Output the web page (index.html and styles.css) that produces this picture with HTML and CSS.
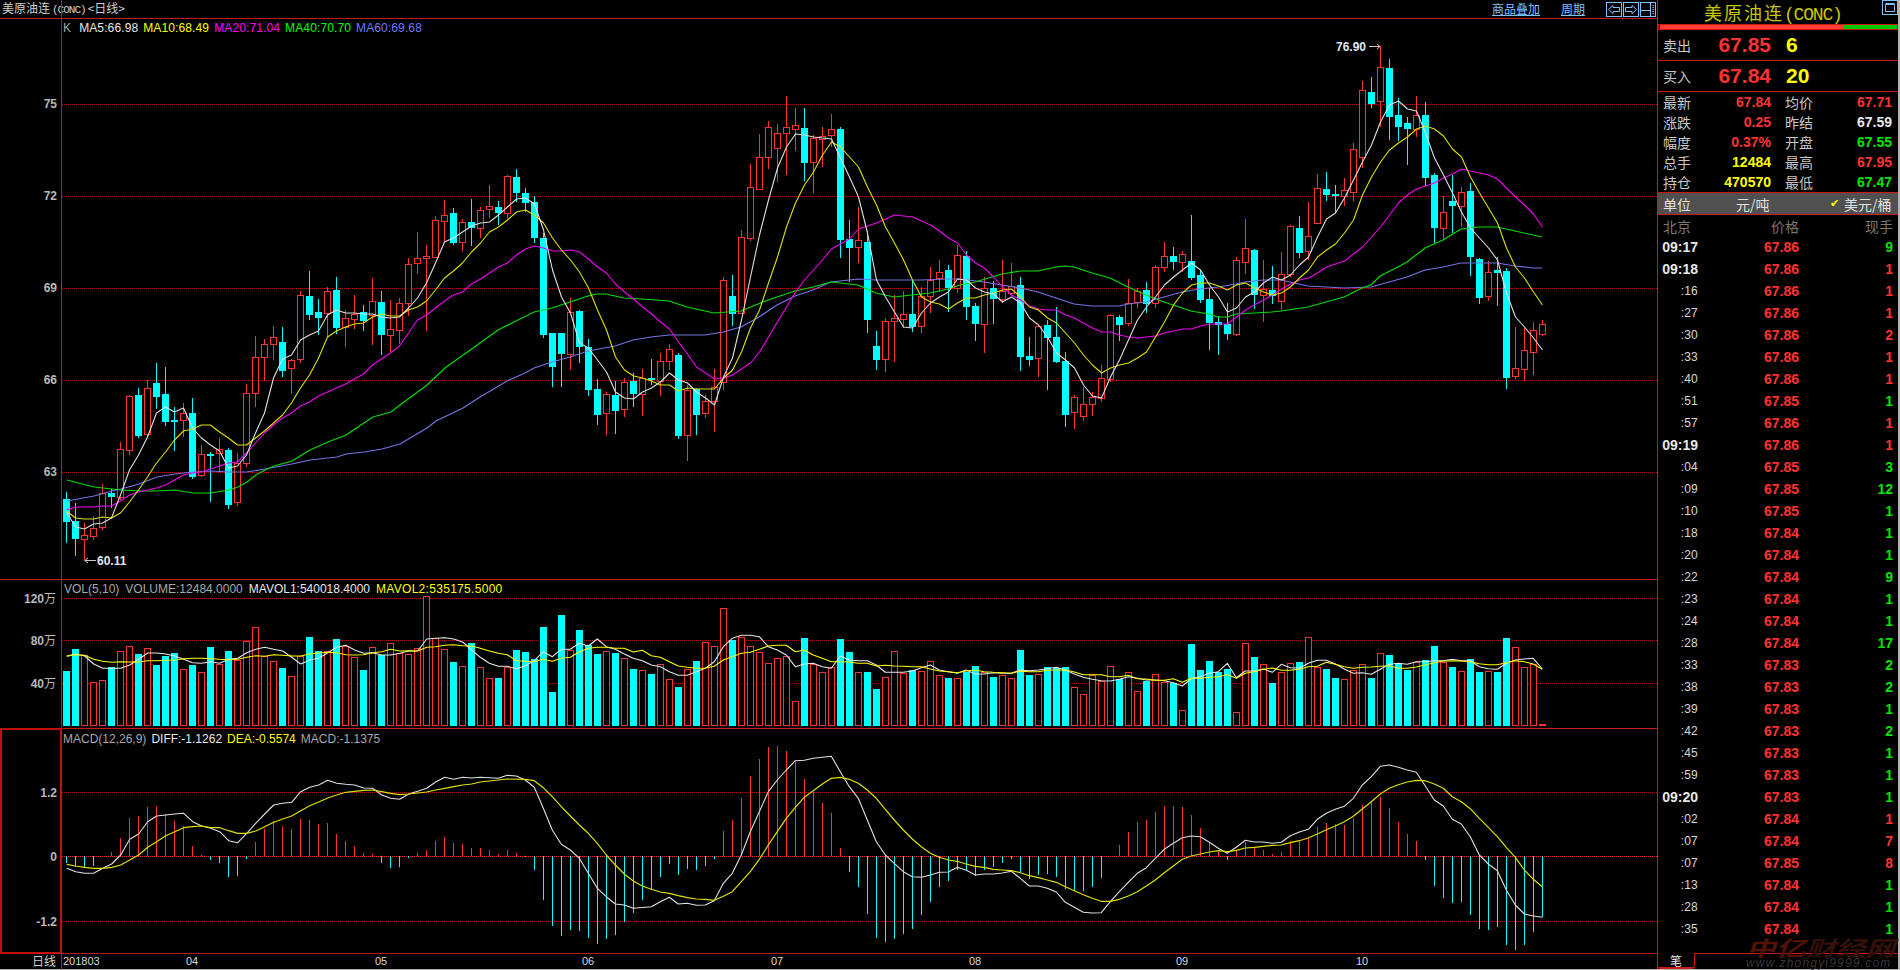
FILE: index.html
```html
<!DOCTYPE html>
<html lang="zh-CN">
<head>
<meta charset="utf-8">
<title>美原油连(CONC)</title>
<link rel="stylesheet" href="styles.css">
</head>
<body>
<div class="app">
  <main class="main">
    <header class="topbar">
      <div class="crumb">美原油连<span class="crumb-code">(CONC)</span>&lt;日线&gt;</div>
      <nav class="tools">
        <a class="tool-link">商品叠加</a>
        <a class="tool-link">周期</a>
        <div class="tool-btns">
          <svg class="btn" viewBox="0 0 16 15"><rect x=".5" y=".5" width="15" height="14"/><path d="M2.5 7.5 7 3.5V5.5H13.5V9.5H7V11.5Z"/></svg>
          <svg class="btn" viewBox="0 0 16 15"><rect x=".5" y=".5" width="15" height="14"/><path d="M13.5 7.5 9 3.5V5.5H2.5V9.5H9V11.5Z"/></svg>
          <svg class="btn" viewBox="0 0 16 15"><rect x=".5" y=".5" width="15" height="14"/><path d="M.5 8.5H10.5M10.5 .5V14.5M12.5 3.5H14M12.5 5.5H14M12.5 7.5H14M12.5 9.5H14M12.5 11.5H14"/></svg>
        </div>
      </nav>
    </header>

    <section class="pane pane-k">
      <svg id="chart-k" class="plot" width="1657" height="560" viewBox="0 19 1657 560"></svg>
      <div class="legend legend-k">
        <span class="c-grey lg-k">K</span>
        <span class="c-white">MA5:66.98</span>
        <span class="c-yellow">MA10:68.49</span>
        <span class="c-magenta">MA20:71.04</span>
        <span class="c-green">MA40:70.70</span>
        <span class="c-blue">MA60:69.68</span>
      </div>
    </section>

    <section class="pane pane-vol">
      <svg id="chart-vol" class="plot" width="1657" height="148" viewBox="0 580 1657 148"></svg>
      <div class="legend legend-vol">
        <span class="c-grey">VOL(5,10)</span>
        <span class="c-grey">VOLUME:12484.0000</span>
        <span class="c-white">MAVOL1:540018.4000</span>
        <span class="c-yellow lg-wide">MAVOL2:535175.5000</span>
      </div>
    </section>

    <section class="pane pane-macd">
      <svg id="chart-macd" class="plot" width="1657" height="224" viewBox="0 729 1657 224"></svg>
      <div class="legend legend-macd">
        <span class="c-grey">MACD(12,26,9)</span>
        <span class="c-white">DIFF:-1.1262</span>
        <span class="c-yellow">DEA:-0.5574</span>
        <span class="c-grey">MACD:-1.1375</span>
      </div>
    </section>

    <section class="pane-axis">
      <svg id="chart-axis" class="plot" width="1657" height="15" viewBox="0 954 1657 15"></svg>
    </section>
  </main>

  <aside class="side">
    <div class="side-title">
      <span>美原油连<span class="title-code">(CONC)</span></span>
      <svg class="btn btn-max" viewBox="0 0 16 15"><rect x=".5" y=".5" width="15" height="14"/><path d="M3.5 4.5H12.5V11.5H3.5ZM3.5 3.5H12.5"/></svg>
    </div>
    <div class="ratio"><div class="ratio-up"></div><div class="ratio-down"></div></div>

    <div class="quote">
      <span class="label">卖出</span><span class="quote-price up">67.85</span><span class="quote-vol">6</span>
    </div>
    <div class="quote">
      <span class="label">买入</span><span class="quote-price up">67.84</span><span class="quote-vol">20</span>
    </div>

    <div class="stats">
      <span class="label">最新</span><span class="num up">67.84</span><span class="label lab2">均价</span><span class="num up">67.71</span>
      <span class="label">涨跌</span><span class="num up">0.25</span><span class="label lab2">昨结</span><span class="num white">67.59</span>
      <span class="label">幅度</span><span class="num up">0.37%</span><span class="label lab2">开盘</span><span class="num down">67.55</span>
      <span class="label">总手</span><span class="num yellow">12484</span><span class="label lab2">最高</span><span class="num up">67.95</span>
      <span class="label">持仓</span><span class="num yellow">470570</span><span class="label lab2">最低</span><span class="num down">67.47</span>
    </div>

    <div class="unit">
      <span class="unit-label">单位</span>
      <span class="unit-a">元/吨</span>
      <span class="unit-check">✔</span>
      <span class="unit-b">美元/桶</span>
    </div>

    <div class="ticks-head">
      <span>北京</span><span>价格</span><span>现手</span>
    </div>

    <div class="ticks">
      <div class="row"><b class="t">09:17</b><b class="up">67.86</b><b class="down">9</b></div>
      <div class="row"><b class="t">09:18</b><b class="up">67.86</b><b class="up">1</b></div>
      <div class="row"><i>:16</i><b class="up">67.86</b><b class="up">1</b></div>
      <div class="row"><i>:27</i><b class="up">67.86</b><b class="up">1</b></div>
      <div class="row"><i>:30</i><b class="up">67.86</b><b class="up">2</b></div>
      <div class="row"><i>:33</i><b class="up">67.86</b><b class="up">1</b></div>
      <div class="row"><i>:40</i><b class="up">67.86</b><b class="up">1</b></div>
      <div class="row"><i>:51</i><b class="up">67.85</b><b class="down">1</b></div>
      <div class="row"><i>:57</i><b class="up">67.86</b><b class="up">1</b></div>
      <div class="row"><b class="t">09:19</b><b class="up">67.86</b><b class="up">1</b></div>
      <div class="row"><i>:04</i><b class="up">67.85</b><b class="down">3</b></div>
      <div class="row"><i>:09</i><b class="up">67.85</b><b class="down">12</b></div>
      <div class="row"><i>:10</i><b class="up">67.85</b><b class="down">1</b></div>
      <div class="row"><i>:18</i><b class="up">67.84</b><b class="down">1</b></div>
      <div class="row"><i>:20</i><b class="up">67.84</b><b class="down">1</b></div>
      <div class="row"><i>:22</i><b class="up">67.84</b><b class="down">9</b></div>
      <div class="row"><i>:23</i><b class="up">67.84</b><b class="down">1</b></div>
      <div class="row"><i>:24</i><b class="up">67.84</b><b class="down">1</b></div>
      <div class="row"><i>:28</i><b class="up">67.84</b><b class="down">17</b></div>
      <div class="row"><i>:33</i><b class="up">67.83</b><b class="down">2</b></div>
      <div class="row"><i>:38</i><b class="up">67.83</b><b class="down">2</b></div>
      <div class="row"><i>:39</i><b class="up">67.83</b><b class="down">1</b></div>
      <div class="row"><i>:42</i><b class="up">67.83</b><b class="down">2</b></div>
      <div class="row"><i>:45</i><b class="up">67.83</b><b class="down">1</b></div>
      <div class="row"><i>:59</i><b class="up">67.83</b><b class="down">1</b></div>
      <div class="row"><b class="t">09:20</b><b class="up">67.83</b><b class="down">1</b></div>
      <div class="row"><i>:02</i><b class="up">67.84</b><b class="up">1</b></div>
      <div class="row"><i>:07</i><b class="up">67.84</b><b class="up">7</b></div>
      <div class="row"><i>:07</i><b class="up">67.85</b><b class="up">8</b></div>
      <div class="row"><i>:13</i><b class="up">67.84</b><b class="down">1</b></div>
      <div class="row"><i>:28</i><b class="up">67.84</b><b class="down">1</b></div>
      <div class="row"><i>:35</i><b class="up">67.84</b><b class="down">1</b></div>
    </div>

    <div class="foot">
      <div class="foot-tab">笔</div>
      <div class="foot-rest"></div>
      <div class="watermark">
        <div class="wm-cn"><span class="wm-a">中亿</span><span class="wm-b">财经网</span></div>
        <div class="wm-en">www.zhongyi9999.com</div>
      </div>
    </div>
  </aside>
</div>
<script src="chart.js"></script>
</body>
</html>
```

FILE: styles.css
```css
* { box-sizing: border-box; }
html, body { margin: 0; padding: 0; background: #000; }
body {
  width: 1900px;
  height: 970px;
  overflow: hidden;
  font-family: "Liberation Sans", "Noto Sans CJK SC", sans-serif;
  color: #c8c8c8;
}
.app {
  display: flex;
  width: 1900px;
  height: 970px;
  border-bottom: 1px solid #b4b4b4;
}

/* left */
.main { width: 1657px; display: flex; flex-direction: column; flex: none; }
.topbar {
  height: 19px;
  border-bottom: 1px solid #c81818;
  display: flex;
  align-items: center;
  justify-content: space-between;
  padding-left: 2px;
  flex: none;
}
.crumb {
  font: 12px/18px "Noto Sans CJK SC", sans-serif;
  color: #d0d0d0;
  white-space: nowrap;
}
.crumb-code { font: 11px/18px "Liberation Mono", monospace; letter-spacing: -1px; margin: 0 2px 0 2px; }
.tools { display: flex; align-items: center; gap: 21px; }
.tool-link {
  font: 12px/13px "Noto Sans CJK SC", sans-serif;
  color: #80c0ff;
  border-bottom: 1px solid #80c0ff;
}
.tool-btns { display: flex; gap: 1px; padding-right: 1px; }
.btn { width: 16px; height: 15px; display: block; fill: none; stroke: #80c0ff; stroke-width: 1; }

.pane { position: relative; flex: none; border-bottom: 1px solid #c81818; }
.pane-k { height: 561px; }
.pane-vol { height: 149px; }
.pane-macd { height: 225px; border-bottom-color: #b81818; }
.pane-axis { height: 15px; flex: none; }
.plot { display: block; overflow: visible; }

.legend {
  position: absolute;
  left: 63px;
  display: flex;
  gap: 6px;
  font-size: 12px;
  line-height: 14px;
  white-space: nowrap;
}
.legend-k { top: 2px; gap: 5px; letter-spacing: .12px; }
.lg-k { margin-right: 3px; }
.legend-vol { top: 2px; left: 64px; }
.lg-wide { letter-spacing: .3px; }
.legend-macd { top: 3px; gap: 5px; }
.c-grey { color: #a8a8a8; }
.c-white { color: #e8e8e8; }
.c-yellow { color: #ffff00; }
.c-magenta { color: #ff00ff; }
.c-green { color: #00ff00; }
.c-blue { color: #6c78ff; }

/* svg text */
.tick { font: bold 12px "Liberation Sans", "Noto Sans CJK SC", sans-serif; fill: #b8b8b8; text-anchor: end; }
.tick-cn { font: 12px "Noto Sans CJK SC", sans-serif; }
.date { font: 11px "Liberation Sans", sans-serif; fill: #d8d8d8; }
.mark { font: bold 12px "Liberation Sans", sans-serif; fill: #dfe8f0; }
.axis-cn { font: 12px "Noto Sans CJK SC", sans-serif; fill: #d0d0d0; text-anchor: end; }

/* right */
.side {
  width: 243px;
  flex: none;
  display: flex;
  flex-direction: column;
  border-left: 1px solid #c81818;
  border-right: 2px solid #b4b4b4;
  position: relative;
}
.side-title {
  height: 24px;
  flex: none;
  display: flex;
  align-items: center;
  padding-left: 46px;
  padding-top: 2px;
  font: 18px/24px "Noto Sans CJK SC", sans-serif;
  letter-spacing: 2px;
  color: #c8c800;
  position: relative;
  white-space: nowrap;
}
.title-code { font: 18px/24px "Liberation Mono", monospace; letter-spacing: -1.2px; }
.btn-max { position: absolute; right: 0; top: 0; }
.ratio {
  height: 6px;
  flex: none;
  display: flex;
  border: 1px solid #c81818;
  padding-left: 1px;
}
.ratio-up { width: 183px; background: #ff3c32; }
.ratio-down { flex: 1; background: #00c800; }
.label { font: 14px/20px "Noto Sans CJK SC", sans-serif; color: #c8c8c8; }
.quote {
  height: 31px;
  flex: none;
  display: flex;
  align-items: center;
  padding-left: 5px;
  border-bottom: 1px solid #c81818;
}
.quote-price {
  width: 80px;
  text-align: right;
  font: bold 21px/30px "Liberation Sans", sans-serif;
}
.quote .label { width: 28px; }
.quote-vol { font: bold 21px/30px "Liberation Sans", sans-serif; color: #ffff00; margin-left: 15px; }
.up { color: #ff3232; }
.down { color: #00e600; }
.white { color: #e8e8e8; }
.yellow { color: #ffff00; }
.stats {
  height: 100px;
  flex: none;
  display: grid;
  grid-template-columns: 28px 80px 42px 79px;
  grid-auto-rows: 20px;
  padding-left: 5px;
}
.lab2 { padding-left: 14px; }
.num { font: bold 14px/20px "Liberation Sans", sans-serif; text-align: right; }
.unit {
  height: 23px;
  flex: none;
  background: #505050;
  border-top: 1px solid #c81818;
  border-bottom: 1px solid #c81818;
  display: grid;
  grid-template-columns: 73px 94px 14px 1fr;
  align-items: center;
  padding-left: 5px;
  font: 14px/20px "Noto Sans CJK SC", sans-serif;
  color: #e0e0e0;
  white-space: nowrap;
}
.unit-check { color: #ffff00; font: 11px/20px "DejaVu Sans", sans-serif; }
.ticks-head {
  height: 21px;
  flex: none;
  display: grid;
  grid-template-columns: 1fr auto auto;
  padding-left: 5px;
  font: 14px/22px "Noto Sans CJK SC", sans-serif;
  color: #787878;
}
.ticks-head span:nth-child(2) { margin-right: 66px; }
.ticks-head span:nth-child(3) { margin-right: 5px; }
.ticks { flex: none; }
.row {
  height: 22px;
  display: grid;
  grid-template-columns: 40px 101px 94px;
  align-items: center;
  text-align: right;
  font: bold 14px/14px "Liberation Sans", sans-serif;
}
.row i { font: normal 12px/14px "Liberation Sans", sans-serif; color: #d8d8d8; letter-spacing: .2px; }
.row .t { color: #e8e8e8; }
.foot {
  position: absolute;
  left: 0; right: 0; top: 953px;
  height: 16px;
  display: flex;
}
.foot-tab {
  width: 37px;
  height: 16px;
  border-right: 1px solid #c81818;
  border-bottom: 2px solid #c81818;
  border-bottom-right-radius: 4px;
  border-bottom-left-radius: 2px;
  text-align: center;
  font: 12px/16px "Noto Sans CJK SC", sans-serif;
  color: #e8e8e8;
}
.foot-rest { flex: 1; border-top: 1px solid #c81818; }
.watermark {
  position: absolute;
  left: 88px;
  top: -16px;
  width: 152px;
  pointer-events: none;
}
.wm-cn {
  font: italic bold 21px/20px "Noto Sans CJK SC", sans-serif;
  transform: scaleX(1.42);
  transform-origin: left top;
  white-space: nowrap;
}
.wm-a { color: #521208; }
.wm-b { color: #33100c; }
.wm-en {
  font: italic 12px/11px "Liberation Sans", sans-serif;
  letter-spacing: 1.2px;
  color: #383838;
  white-space: nowrap;
  margin-top: 1px;
}
```

FILE: chart.js
```js
var CANDLES = 'c492,499,522,543 c503,521,539,556 r523,535,539,561 r516,528,536,540 r484,493,527,530 c489,493,497,508 r442,449,497,500 r395,396,450,455 c388,395,436,438 r380,388,434,438 c363,383,397,409 c367,394,422,426 c407,420,422,451 r403,413,420,437 c398,413,477,479 r445,454,475,477 c452,454,456,502 r438,449,453,472 c448,450,505,509 r453,463,502,506 r384,393,463,467 r336,357,393,407 r339,344,357,381 r326,337,344,360 c327,342,371,377 r359,360,368,394 r291,295,359,363 c271,296,315,320 c299,312,318,335 r287,291,313,337 c277,290,328,334 r310,318,327,347 r295,314,319,329 c305,312,321,331 r278,301,315,345 c291,302,335,355 r300,329,335,352 r298,303,330,344 r258,264,303,316 r232,258,263,274 r245,256,258,331 r216,220,257,258 r200,215,221,243 c208,213,243,245 r219,222,242,251 c199,222,228,246 r207,210,228,238 r185,206,209,218 c201,207,213,225 r175,176,213,218 c169,177,193,202 c188,193,203,212 c196,202,238,243 c233,238,335,338 c333,333,367,387 c333,333,354,387 r298,312,354,370 c310,311,347,363 c339,347,390,396 c379,389,415,425 r392,394,413,435 c381,395,411,434 r378,382,409,417 c373,381,394,407 r369,378,394,416 c359,378,380,385 r353,361,381,396 r344,349,361,370 c353,355,436,439 r385,390,435,461 c388,389,415,435 r395,401,413,418 r369,387,401,432 r277,280,382,390 c275,296,314,326 r230,237,313,313 r164,187,238,241 r134,157,189,190 r121,127,157,169 r124,133,148,182 r96,127,133,175 r108,125,129,151 c108,128,163,181 r135,138,162,193 r127,136,139,167 r114,129,135,147 c127,129,240,258 c220,239,248,282 r207,240,247,263 c231,242,320,333 c331,346,360,370 r318,321,359,372 r295,318,321,362 r291,314,319,328 c280,314,327,332 r287,296,326,333 r267,280,296,313 r260,272,278,292 c265,270,288,312 r245,255,288,293 c251,256,307,320 c303,306,324,341 r277,288,324,353 c281,288,299,324 r260,291,299,303 r263,286,293,295 c277,285,357,371 c337,356,360,366 r325,326,358,377 c320,325,338,390 c307,337,362,363 c352,361,415,427 r395,397,412,429 r387,404,416,421 r392,397,404,416 r365,378,398,402 r314,315,379,382 c315,317,325,341 r279,303,323,326 r288,291,302,308 c282,290,304,313 r265,267,303,308 r242,256,267,272 c247,256,262,270 r251,254,262,272 c215,261,278,280 c270,275,300,303 c288,299,323,350 c316,322,325,355 c303,324,334,340 r257,260,334,336 r219,248,262,274 c249,250,295,309 r260,289,295,322 c266,290,296,304 r252,274,301,310 r225,226,274,277 c216,228,253,258 r202,236,251,260 r174,188,223,224 c172,189,195,201 c185,194,196,213 r178,190,196,206 r143,149,192,201 r81,90,157,168 c77,92,104,108 r46,67,101,127 c59,68,117,140 c98,115,127,141 c117,123,129,165 r96,115,129,137 c102,115,178,186 c173,175,228,243 r196,212,228,239 c175,201,206,233 r187,192,206,227 c183,191,257,276 c258,259,298,304 r261,272,296,301 c257,270,273,306 c268,271,378,389 r327,368,376,379 r328,350,369,381 r322,330,352,375 r320,324,334,336'.split(' ');

var VOL = [303,237,255,337,331,292,244,229,252,235,285,258,249,298,285,307,231,282,243,270,213,172,258,274,294,319,258,201,243,244,207,228,261,300,232,255,220,248,252,235,79,205,238,276,289,219,292,325,324,292,240,246,267,171,366,135,240,180,225,252,244,249,265,297,301,312,283,328,351,298,273,217,229,115,210,202,229,247,280,265,258,394,204,281,307,292,207,246,307,306,357,322,244,310,300,304,274,316,324,325,306,288,306,321,316,325,240,315,313,291,295,291,352,373,316,333,289,328,307,364,333,313,335,340,421,222,300,273,306,297,427,220,261,283,339,307,280,276,202,292,297,324,328,300,283,324,250,255,280,300,277,270,228,275,291,303,267,306,304,306,204,232,291,283,462];

var HIST = [880,890,893,888,858,846,804,744,738,711,708,733,753,768,828,855,870,878,920,917,866,816,776,754,768,777,747,750,762,760,792,813,828,850,852,878,893,890,863,849,840,813,801,819,822,834,835,840,853,840,849,861,900,990,1067,1098,1080,1083,1103,1121,1107,1094,1055,1030,990,960,920,882,915,896,900,888,866,783,750,684,618,567,531,528,543,570,627,665,699,729,834,906,950,1032,1104,1115,1107,1092,1077,1035,995,950,932,900,903,917,900,890,879,866,906,926,916,912,921,957,962,964,950,924,858,825,786,756,750,726,708,708,711,735,774,816,846,870,840,816,831,840,852,846,813,813,804,771,759,762,765,744,705,696,680,714,756,792,813,870,947,983,998,995,1034,1076,1079,1070,1124,1139,1124,1085,1042];

var MA5 = [512,527,529,524,523,518,495,470,455,437,413,407,412,408,428,438,445,451,468,466,455,433,413,378,359,355,340,335,331,315,310,313,313,314,314,317,318,317,308,298,283,263,242,238,232,226,223,222,215,207,199,198,204,230,270,297,313,343,348,360,372,392,398,399,392,388,382,373,380,383,392,398,405,377,358,320,277,235,200,168,147,134,135,137,138,139,158,177,197,233,280,297,312,327,328,313,303,297,292,279,280,288,292,294,302,297,303,318,325,337,353,360,368,385,396,398,377,360,340,320,307,297,285,277,270,263,270,285,297,312,308,297,292,283,277,280,275,265,257,237,219,213,198,180,162,145,122,105,101,109,111,133,158,175,193,212,228,238,248,260,293,317,327,338,350];
var MA10 = [511,518,519,519,517,518,513,502,490,477,463,452,440,431,429,425,425,432,438,445,445,438,431,423,415,403,388,375,358,337,331,327,324,323,317,314,316,316,310,307,301,290,278,271,263,252,243,232,227,220,212,210,215,223,238,250,260,272,288,310,330,357,370,376,378,381,385,385,391,388,389,389,389,378,370,352,328,310,283,257,227,203,185,172,155,142,147,157,167,187,205,227,243,260,280,297,302,304,309,303,298,298,295,293,290,289,297,307,310,318,323,333,343,355,365,373,368,365,363,358,352,337,322,305,293,285,283,283,286,290,285,283,288,292,295,293,287,278,270,257,250,244,233,220,195,177,162,150,143,137,129,126,129,136,149,157,177,193,208,223,248,267,278,292,305];
var MA20 = [510,507,507,507,506,506,501,495,492,490,488,485,480,475,473,472,469,466,463,462,453,443,433,425,418,413,406,402,396,392,388,384,379,374,365,359,353,346,333,320,315,308,301,295,292,284,279,273,267,263,255,249,246,248,251,251,250,252,259,267,273,284,292,299,307,314,322,329,342,354,367,373,379,378,375,369,363,352,337,322,307,292,280,270,260,249,244,239,229,226,223,219,215,216,217,221,225,231,238,243,255,263,268,277,287,295,300,306,309,310,310,315,318,323,328,332,332,335,337,338,337,336,333,331,329,329,326,324,324,324,317,310,305,300,295,289,284,280,278,273,267,264,261,254,247,237,227,215,203,195,189,186,183,178,174,169,171,173,175,179,188,197,205,214,227];

var MA40 = '67,480 94,487 112,489 121,490 139,491 157,491 175,490 193,493 211,493 229,490 238,487 247,482 256,475 265,470 274,466 292,461 310,450 328,442 346,435 364,423 373,417 391,412 400,405 427,385 445,368 480,343 498,330 516,321 534,312 552,308 570,302 588,296 597,294 606,294 624,298 642,299 669,301 687,307 714,313 741,311 768,300 795,291 813,287 831,282 858,285 876,293 894,297 912,295 930,293 948,289 960,285 975,282 1002,274 1020,271 1038,271 1056,267 1065,266 1074,267 1092,273 1110,278 1128,287 1146,295 1164,302 1182,308 1191,311 1209,314 1218,317 1227,317 1236,314 1254,313 1272,312 1281,311 1308,307 1326,302 1344,297 1362,288 1371,285 1380,276 1398,267 1407,262 1425,248 1443,240 1461,229 1479,227 1497,227 1515,231 1524,233 1542,237';
var MA60 = '67,501 94,496 112,491 121,489 139,484 157,477 175,474 193,472 211,471 229,472 247,472 265,469 292,464 310,460 337,457 346,454 364,452 382,449 400,444 427,428 436,421 463,408 480,397 507,381 525,373 534,368 552,362 570,357 588,351 615,346 633,340 651,337 669,335 687,335 705,335 723,332 741,327 759,317 777,305 795,296 813,290 831,282 858,279 876,280 894,280 921,280 948,279 960,279 984,282 1002,285 1020,288 1038,292 1056,298 1074,304 1092,306 1119,306 1128,304 1146,302 1164,297 1182,292 1200,289 1218,287 1236,284 1245,282 1263,280 1281,280 1308,286 1344,288 1371,287 1389,282 1407,277 1425,270 1443,267 1461,263 1497,263 1515,266 1533,268 1542,268';

// pane-line segments as [x offset, point list]; y is 570 + value / 3
var VOL1 = [[0,[200,258,227,252,254,258,281,282,308,295,335,295,362,295,389,285,416,268,443,249,470,249,497,252,524,258,551,268,578,278,605,280,632,275,659,280,686,268,713,265,740,248,767,238,794,232,821,238,848,243,875,262,902,282,929,270,956,265,983,248,1010,232,1037,226,1064,240,1091,250,1118,248,1145,255,1172,255,1199,250,1226,243,1253,243,1280,207,1307,205,1334,203,1361,207,1388,216,1415,240]],
[480,[1,262,28,280,55,289,82,289,109,296,136,287,163,272,190,245,217,260,244,238,271,238,298,220,325,228,352,207,379,230,406,238,433,252,460,265,487,272,514,285,541,290,568,305,595,316,622,316,649,305,676,295,703,275,730,230,757,205,784,196,811,196,838,200,865,230,892,240,919,255,946,290,973,282,1000,280,1027,290,1054,295,1081,258,1108,270,1135,272,1162,272,1189,285,1216,307,1243,307,1270,307,1297,303,1324,293,1351,285,1378,300,1405,305,1432,310]],
[960,[18,300,46,312,73,312,100,308,127,310,154,310,181,300,208,302,235,300,262,296,289,292,316,300,343,312,370,322,397,328,424,332,451,333,478,328,505,320,532,325,559,330,586,330,613,332,640,338,667,348,694,326,721,320,748,310,775,305,802,280,829,323,856,303,883,303,910,297,937,307,964,283,991,293,1018,295,1045,280,1072,271,1099,271,1126,282,1153,297,1180,310,1207,308,1234,313,1261,298,1288,283,1315,280,1342,283,1369,275,1396,275,1423,272]],
[1440,[10,272,37,268,64,272,91,272,118,290,145,296,172,298,199,280,226,270,253,267,280,265,307,297]]];
var VOL2 = [[0,[200,259,227,254,254,256,281,268,308,274,335,277,362,275,389,276,416,276,443,272,470,272,497,271,524,270,551,266,578,265,605,265,632,266,659,268,686,269,713,268,740,262,767,257,794,259,821,254,848,256,875,258,902,258,929,252,956,249,983,247,1010,248,1037,254,1064,255,1091,254,1118,248,1145,245,1172,238,1199,243,1226,242,1253,243,1280,232,1307,230,1334,226,1361,224,1388,227,1415,228]],
[480,[1,235,28,243,55,250,82,254,109,272,136,274,163,275,190,268,217,274,244,265,271,262,298,245,325,235,352,232,379,232,406,235,433,235,460,246,487,241,514,257,541,262,568,275,595,288,622,292,649,295,676,294,703,289,730,270,757,260,784,250,811,247,838,238,865,228,892,226,919,226,946,245,973,240,1000,255,1027,265,1054,275,1081,275,1108,276,1135,280,1162,280,1189,288,1216,286,1243,288,1270,289,1297,290,1324,290,1351,297,1378,303,1405,305,1432,308]],
[960,[18,303,46,300,73,305,100,307,127,308,154,310,181,304,208,305,235,305,262,301,289,300,316,300,343,306,370,314,397,314,424,314,451,320,478,320,505,316,532,326,559,327,586,331,613,331,640,326,667,337,694,325,721,325,748,322,775,320,802,314,829,325,856,310,883,305,910,298,937,294,964,301,991,301,1018,298,1045,290,1072,289,1099,277,1126,283,1153,290,1180,295,1207,292,1234,291,1261,289,1288,287,1315,295,1342,295,1369,291,1396,285,1423,278]],
[1440,[10,273,37,272,64,273,91,275,118,281,145,284,172,284,199,278,226,272,253,275,280,282,307,298]]];
var DIFF = [[0,[200,895,227,905,254,910,281,910,308,895,335,882,362,855,389,808,416,792,443,755,470,738,497,735,524,732,551,730,578,755,605,768,632,775,659,785,686,812,713,818,740,790,767,760,794,732,821,705,848,700,875,697,902,665,929,652,956,645,983,631,1010,640,1037,643,1064,645,1091,654,1118,655,1145,675,1172,685,1199,688,1226,672,1253,664,1280,655,1307,636,1334,622,1361,628,1388,622,1415,624]],
[480,[1,622,55,625,82,616,109,618,136,630,163,652,190,715,217,780,244,823,271,840,298,865,325,910,352,955,379,980,406,1002,433,1005,460,1015,514,1010,541,995,568,982,595,1002,622,1000,649,1006,676,1005,703,992,730,940,757,910,784,855,811,785,838,725,865,665,892,630,919,600,946,572,973,571,1000,565,1027,562,1054,559,1081,605,1108,650,1135,685,1162,750,1189,815,1216,855,1243,880,1270,905,1297,920,1324,922,1351,915,1378,907,1405,906,1432,892]],
[960,[18,900,46,915,73,912,100,912,127,909,154,904,181,925,208,948,235,948,262,955,289,966,316,997,343,1012,370,1027,397,1029,424,1028,451,995,478,965,505,937,532,910,559,893,586,865,613,838,640,820,667,803,694,798,721,800,748,817,775,835,802,850,829,832,856,811,883,816,910,816,937,820,964,817,991,797,1018,786,1045,778,1072,748,1099,730,1126,718,1153,709,1180,685,1207,645,1234,620,1261,589,1288,585,1315,592,1342,600,1369,607,1396,648,1423,690]],
[1440,[10,708,37,748,64,762,91,800,118,855,145,882,172,902,199,960,226,1005,253,1032,280,1038,307,1042]]];
var DEA = [[0,[200,883,227,888,254,892,281,895,308,895,335,892,362,885,389,870,416,855,443,832,470,815,497,797,524,785,551,773,578,770,605,768,632,773,659,773,686,782,713,790,740,790,767,783,794,770,821,757,848,747,875,738,902,722,929,707,956,696,983,684,1010,675,1037,667,1064,664,1091,661,1118,660,1145,665,1172,670,1199,674,1226,672,1253,669,1280,666,1307,660,1334,655,1361,650,1388,645,1415,642]],
[480,[1,636,55,630,82,627,136,628,163,632,190,653,217,680,244,710,271,738,298,765,325,790,352,820,379,855,406,885,433,912,460,933,487,948,514,958,541,966,568,970,595,977,622,983,649,987,676,988,703,991,730,979,757,965,784,935,811,905,838,868,865,825,892,785,919,745,946,712,973,682,1000,662,1027,642,1054,625,1081,622,1108,628,1135,640,1162,660,1189,685,1216,718,1243,750,1270,780,1297,807,1324,830,1351,850,1378,862,1405,870,1432,874]],
[960,[18,882,46,889,73,892,100,898,127,900,154,902,181,908,208,917,235,923,262,930,289,937,316,950,343,962,370,974,397,985,424,994,451,994,478,988,505,978,532,965,559,948,586,930,613,908,640,888,667,868,694,858,721,852,748,846,775,842,802,845,829,841,856,834,883,832,910,829,937,826,964,825,991,818,1018,812,1045,804,1072,792,1099,779,1126,768,1153,755,1180,739,1207,717,1234,695,1261,672,1288,655,1315,644,1342,636,1369,631,1396,632,1423,642]],
[1440,[10,655,37,680,64,695,91,716,118,745,145,772,172,800,199,832,226,862,253,900,280,928,307,950]]];

var RED = '#ff3232', CYAN = '#00ffff';
function col(i) { return 66 + 9 * i; }
function rect(x, y, w, h, c) { return '<rect x="' + x + '" y="' + y + '" width="' + w + '" height="' + h + '" fill="' + c + '" shape-rendering="crispEdges"/>'; }
function hollow(x, y, w, h, c) { return '<rect x="' + (x + .5) + '" y="' + (y + .5) + '" width="' + (w - 1) + '" height="' + Math.max(h - 1, 0) + '" fill="#000" stroke="' + c + '" stroke-width="1" shape-rendering="crispEdges"/>'; }
function grid(y, c) { return '<line x1="62" x2="1657" y1="' + (y + .5) + '" y2="' + (y + .5) + '" stroke="' + (c || '#b01010') + '" stroke-dasharray="1 1" shape-rendering="crispEdges"/>'; }
function poly(p, c, w) { return '<polyline points="' + p + '" fill="none" stroke="' + c + '" stroke-width="' + (w || 1.1) + '" stroke-linejoin="round"/>'; }
function byIndex(a) { return a.map(function (y, i) { return (col(i) + .5) + ',' + y; }).join(' '); }
function bySeg(s) {
  var out = [];
  s.forEach(function (seg) {
    for (var i = 0; i < seg[1].length; i += 2) out.push((seg[0] + seg[1][i] / 3).toFixed(1) + ',' + (570 + seg[1][i + 1] / 3).toFixed(1));
  });
  return out.join(' ');
}
function tick(y, t, cn) {
  var body = cn ? t + '<tspan class="tick-cn">' + cn + '</tspan>' : t;
  return '<text class="tick" x="' + (cn ? 56 : 57) + '" y="' + (y + 4) + '">' + body + '</text>';
}
var AXIS = rect(61, 0, 1, 970, '#c81818');

// candlesticks
var k = AXIS;
[[104, '75'], [196, '72'], [288, '69'], [380, '66'], [472, '63']].forEach(function (g) { k += grid(g[0]) + tick(g[0], g[1]); });
CANDLES.forEach(function (s, i) {
  var up = s[0] === 'r', v = s.slice(1).split(',').map(Number), x = col(i);
  if (up) {
    k += rect(x, v[0], 1, v[1] - v[0], RED) + rect(x, v[2], 1, v[3] - v[2], RED);
    k += hollow(x - 3, v[1], 7, v[2] - v[1] + 1, RED);
  } else {
    k += rect(x, v[0], 1, v[3] - v[0], CYAN) + rect(x - 3, v[1], 7, Math.max(v[2] - v[1], 2), CYAN);
  }
});
k += poly(MA60, '#7474e4', 1.2) + poly(MA40, '#00dc00', 1.2) + poly(byIndex(MA20), '#f000f0') + poly(byIndex(MA10), '#e0e000') + poly(byIndex(MA5), '#e0e0e0');
k += '<line x1="85" x2="96" y1="560.5" y2="560.5" stroke="#c8c8c8"/><path d="M88 558 85 560.5 88 563" fill="none" stroke="#c8c8c8"/>';
k += '<text class="mark" x="97" y="565">60.11</text>';
k += '<text class="mark" x="1336" y="51">76.90</text>';
k += '<line x1="1369" x2="1380" y1="46.5" y2="46.5" stroke="#c8c8c8"/><path d="M1377 44 1380 46.5 1377 49" fill="none" stroke="#c8c8c8"/>';
document.getElementById('chart-k').innerHTML = k;

// volume
var vol = AXIS;
[[598, '120'], [640, '80'], [683, '40']].forEach(function (g) { vol += grid(g[0]) + tick(g[0] + 1, g[1], '万'); });
VOL.forEach(function (z, i) {
  var top = Math.round(570 + z / 3), x = col(i) - 3;
  vol += CANDLES[i][0] === 'r' ? hollow(x, top, 7, 726 - top, RED) : rect(x, top, 7, 726 - top, CYAN);
});
vol += poly(bySeg(VOL1), '#e8e8e8') + poly(bySeg(VOL2), '#ffff00');
document.getElementById('chart-vol').innerHTML = vol;

// macd
var macd = rect(61, 729, 1, 224, '#c81818');
macd += grid(792) + grid(856, '#ff3232') + grid(921);
macd += tick(793, '1.2') + tick(857, '0') + tick(922, '-1.2');
macd += '<rect x="1" y="729" width="60" height="224" fill="none" stroke="#c01010" stroke-width="2" shape-rendering="crispEdges"/>';
HIST.forEach(function (z, i) {
  var end = Math.round(570 + z / 3), up = end <= 856;
  macd += rect(col(i), Math.min(end, 856), 1, Math.max(Math.abs(end - 856), 1), up ? RED : CYAN);
});
macd += poly(bySeg(DIFF), '#e0e0e0') + poly(bySeg(DEA), '#e0e000', 1.2);
document.getElementById('chart-macd').innerHTML = macd;

// time axis
var ax = rect(61, 954, 1, 15, '#c81818');
ax += '<text class="axis-cn" x="56" y="966">日线</text>';
[[63, '201803'], [186, '04'], [375, '05'], [582, '06'], [771, '07'], [969, '08'], [1176, '09'], [1356, '10']].forEach(function (d) {
  ax += '<text class="date" x="' + d[0] + '" y="965">' + d[1] + '</text>';
});
document.getElementById('chart-axis').innerHTML = ax;
```
